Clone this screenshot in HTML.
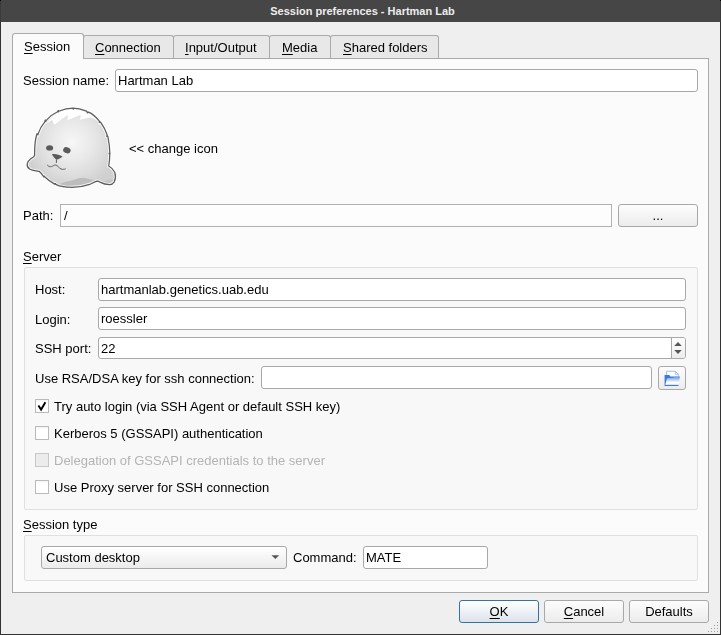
<!DOCTYPE html>
<html><head><meta charset="utf-8">
<style>
*{box-sizing:border-box;margin:0;padding:0}
html,body{width:721px;height:635px;overflow:hidden;background:#efefef}
body{-webkit-font-smoothing:antialiased}
.t,.inp span,.btn{will-change:transform}
body{position:relative;font-family:"Liberation Sans",sans-serif;font-size:13px;color:#000}
.a{position:absolute}
.t{position:absolute;white-space:nowrap;line-height:15px}
.u{text-decoration:underline;text-underline-offset:2px}
.inp{position:absolute;background:#fff;border:1px solid #a8a8a8;border-radius:3px}
.inp span{position:absolute;left:2px;top:3px;line-height:15px;white-space:nowrap}
.btn{position:absolute;border:1px solid #a8a8a8;border-radius:3px;background:linear-gradient(#fdfdfd,#ececec);text-align:center;line-height:20px}
.cb{position:absolute;width:14px;height:14px;border:1px solid #bababa;border-radius:0.5px;background:linear-gradient(#f2f2f2,#fff 2px)}
.grp{position:absolute;border:1px solid #e0e0e0;border-radius:2px;background:#f8f8f8}
</style></head><body>
<!-- title bar -->
<div class="a" style="left:0;top:0;width:721px;height:22px;background:#464646"></div>
<div class="t" style="left:2px;top:4px;width:721px;text-align:center;font:bold 11px 'Liberation Sans',sans-serif;color:#ededed;line-height:14px;will-change:auto">Session preferences - Hartman Lab</div>
<div class="a" style="left:0;top:0;width:1px;height:22px;background:#3a3a3a"></div>
<div class="a" style="left:720px;top:0;width:1px;height:22px;background:#3a3a3a"></div>
<div class="a" style="left:0;top:0;width:1px;height:1px;background:#000"></div>
<div class="a" style="left:720px;top:0;width:1px;height:1px;background:#000"></div>
<!-- window border -->
<div class="a" style="left:0;top:22px;width:1px;height:613px;background:#333"></div>
<div class="a" style="left:720px;top:22px;width:1px;height:613px;background:#333"></div>
<div class="a" style="left:0;top:634px;width:721px;height:1px;background:#333"></div>

<!-- tabs -->
<div class="a" style="left:83px;top:35px;width:91px;height:24px;background:#e8e8e8;border:1px solid #aaa;border-bottom:none;border-radius:3px 3px 0 0"></div>
<div class="a" style="left:173px;top:35px;width:97px;height:24px;background:#e8e8e8;border:1px solid #aaa;border-bottom:none;border-radius:3px 3px 0 0"></div>
<div class="a" style="left:269px;top:35px;width:62px;height:24px;background:#e8e8e8;border:1px solid #aaa;border-bottom:none;border-radius:3px 3px 0 0"></div>
<div class="a" style="left:330px;top:35px;width:109px;height:24px;background:#e8e8e8;border:1px solid #aaa;border-bottom:none;border-radius:3px 3px 0 0"></div>
<!-- pane -->
<div class="a" style="left:12px;top:58px;width:697px;height:535px;background:#fbfbfb;border:1px solid #aaa"></div>
<div class="a" style="left:12px;top:33px;width:72px;height:26px;background:#fbfbfb;border:1px solid #aaa;border-bottom:none;border-radius:3px 3px 0 0"></div>

<div class="t" style="left:24px;top:39px"><span class="u">S</span>ession</div>
<div class="t" style="left:95px;top:40px"><span class="u">C</span>onnection</div>
<div class="t" style="left:185px;top:40px"><span class="u">I</span>nput/Output</div>
<div class="t" style="left:282px;top:40px"><span class="u">M</span>edia</div>
<div class="t" style="left:343px;top:40px"><span class="u">S</span>hared folders</div>

<!-- session name -->
<div class="t" style="left:23px;top:73px">Session name:</div>
<div class="inp" style="left:115px;top:69px;width:583px;height:23px"><span>Hartman Lab</span></div>

<!-- seal icon placeholder -->
<svg class="a" style="left:24px;top:104px" width="100" height="90" viewBox="24 104 100 90">
<defs>
<radialGradient id="sg" cx="72" cy="142" r="46" gradientUnits="userSpaceOnUse">
<stop offset="0" stop-color="#f6f6f6"/><stop offset="0.4" stop-color="#eaeaea"/><stop offset="0.75" stop-color="#dcdcdc"/><stop offset="1" stop-color="#d0d0d0"/>
</radialGradient>
</defs>
<path d="M73,108.2 C77,108.3 82,109.5 86.6,111.2 L87.4,112.5 L88.6,112.1 C92,113.5 96,117 99.2,120.8 L99.6,122.4 L100.6,122.1 C103,125.5 105.5,130 107,134.5 L107,136.3 L107.8,136.4 C108.8,141 109.7,147 109.8,153 C109.8,158 109.4,162.5 108.7,166 C111,167.2 113.5,169.5 114.8,172.5 C115.8,175.5 115.6,179 114.3,181.8 C113,183.8 111.5,184.6 109.5,184.6 C106,184.6 103,183.8 100.5,182.4 C99.2,181.6 98,181 97,181.1 C94.5,182 92,183.3 89.7,184.3 C84,186.3 78,187.4 72,187.4 C65,187.3 60,186.3 56.2,184.6 L55.2,183.6 L54.6,184.1 C50.5,181.8 47.5,179.5 45.2,177.3 L44.2,176.2 L43.5,176.6 C42,174.5 40.8,172.3 39.2,171.4 C35.5,170.8 31.5,170.4 29.6,169 C27.6,167.6 26.9,165.8 27.2,164 C27.6,161.8 28.8,160 30.5,158.9 C32.3,157.8 34.2,156.8 34.6,155.5 C34.6,149 34.9,142 36,137.5 L37,133.6 L37.9,134.4 C39.5,129.5 42,125 45,121.6 L45.1,120.2 L46.3,120.3 C49.5,116.8 53.5,113.6 57.6,111.8 L58.2,110.6 L59.2,111 C63.5,109.3 68,108.3 73,108.2 Z" fill="url(#sg)"/>
<path d="M57,186 C60,183.5 64,181.8 68,181.2 C72,180.6 75,179.5 78,178.4 C81,177.7 84,177.6 87,178.6 C90.5,179.6 94,180.6 97.5,181 C94,182.8 90,184.6 85,186 C79,187.3 71,187.6 64,187 Z" fill="#bdbdbd"/>
<path d="M101,182.2 C104,180.5 108,179.5 112,179.2 C113.5,179.5 114.2,180.5 114,181.5 C112.5,184 110,184.7 107,184.5 C104.5,184.2 102.5,183.3 101,182.2 Z" fill="#c6c6c6"/>
<path d="M44.5,127.5 C47,122 51.5,117 57.5,113.2 C63,110.5 68.5,109.6 74,109.6 C80,109.8 86,111.8 91,114.8 C93.5,116.5 95.5,118.5 97.2,121 C95,119.5 92.5,118 90,117.6 L80,119.8 L80.8,114.8 L67.5,120.2 L67.9,114.8 L54.2,124.8 L52,119.8 L46.5,124 C45.8,125 45.2,126.2 44.5,127.5 Z" fill="#ffffff"/>
<path d="M73,108.2 C77,108.3 82,109.5 86.6,111.2 L87.4,112.5 L88.6,112.1 C92,113.5 96,117 99.2,120.8 L99.6,122.4 L100.6,122.1 C103,125.5 105.5,130 107,134.5 L107,136.3 L107.8,136.4 C108.8,141 109.7,147 109.8,153 C109.8,158 109.4,162.5 108.7,166 C111,167.2 113.5,169.5 114.8,172.5 C115.8,175.5 115.6,179 114.3,181.8 C113,183.8 111.5,184.6 109.5,184.6 C106,184.6 103,183.8 100.5,182.4 C99.2,181.6 98,181 97,181.1 C94.5,182 92,183.3 89.7,184.3 C84,186.3 78,187.4 72,187.4 C65,187.3 60,186.3 56.2,184.6 L55.2,183.6 L54.6,184.1 C50.5,181.8 47.5,179.5 45.2,177.3 L44.2,176.2 L43.5,176.6 C42,174.5 40.8,172.3 39.2,171.4 C35.5,170.8 31.5,170.4 29.6,169 C27.6,167.6 26.9,165.8 27.2,164 C27.6,161.8 28.8,160 30.5,158.9 C32.3,157.8 34.2,156.8 34.6,155.5 C34.6,149 34.9,142 36,137.5 L37,133.6 L37.9,134.4 C39.5,129.5 42,125 45,121.6 L45.1,120.2 L46.3,120.3 C49.5,116.8 53.5,113.6 57.6,111.8 L58.2,110.6 L59.2,111 C63.5,109.3 68,108.3 73,108.2 Z" fill="none" stroke="#ffffff" stroke-width="3.2" opacity="0.8"/>
<path d="M73,108.2 C77,108.3 82,109.5 86.6,111.2 L87.4,112.5 L88.6,112.1 C92,113.5 96,117 99.2,120.8 L99.6,122.4 L100.6,122.1 C103,125.5 105.5,130 107,134.5 L107,136.3 L107.8,136.4 C108.8,141 109.7,147 109.8,153 C109.8,158 109.4,162.5 108.7,166 C111,167.2 113.5,169.5 114.8,172.5 C115.8,175.5 115.6,179 114.3,181.8 C113,183.8 111.5,184.6 109.5,184.6 C106,184.6 103,183.8 100.5,182.4 C99.2,181.6 98,181 97,181.1 C94.5,182 92,183.3 89.7,184.3 C84,186.3 78,187.4 72,187.4 C65,187.3 60,186.3 56.2,184.6 L55.2,183.6 L54.6,184.1 C50.5,181.8 47.5,179.5 45.2,177.3 L44.2,176.2 L43.5,176.6 C42,174.5 40.8,172.3 39.2,171.4 C35.5,170.8 31.5,170.4 29.6,169 C27.6,167.6 26.9,165.8 27.2,164 C27.6,161.8 28.8,160 30.5,158.9 C32.3,157.8 34.2,156.8 34.6,155.5 C34.6,149 34.9,142 36,137.5 L37,133.6 L37.9,134.4 C39.5,129.5 42,125 45,121.6 L45.1,120.2 L46.3,120.3 C49.5,116.8 53.5,113.6 57.6,111.8 L58.2,110.6 L59.2,111 C63.5,109.3 68,108.3 73,108.2 Z" fill="none" stroke="#5e5e5e" stroke-width="1.25" stroke-linejoin="round"/>
<circle cx="37.6" cy="134.5" r="0.85" fill="#5e5e5e"/><circle cx="45.6" cy="121.2" r="0.85" fill="#5e5e5e"/><circle cx="58.3" cy="111.6" r="0.85" fill="#5e5e5e"/><circle cx="73.2" cy="108.8" r="0.85" fill="#5e5e5e"/><circle cx="87.6" cy="112.6" r="0.85" fill="#5e5e5e"/><circle cx="99.6" cy="122.2" r="0.85" fill="#5e5e5e"/><circle cx="107.3" cy="136.2" r="0.85" fill="#5e5e5e"/><circle cx="109.4" cy="153.4" r="0.85" fill="#5e5e5e"/><circle cx="55.3" cy="183.8" r="0.85" fill="#5e5e5e"/><circle cx="44.2" cy="176.6" r="0.85" fill="#5e5e5e"/><ellipse cx="49.6" cy="147.9" rx="3.5" ry="2.7" fill="#5a5a5a"/>
<ellipse cx="66.9" cy="150.3" rx="3.8" ry="3" fill="#5a5a5a" transform="rotate(20 66.9 150.3)"/>
<path d="M52,154.2 C55,153.6 59.5,154.8 62.6,156.6 C61,158 58.5,159.3 56.5,159.8 C55,158.5 53,156.5 52,154.2 Z" fill="#5a5a5a"/>
<path d="M56.4,159.5 L56.4,162.9" stroke="#5a5a5a" stroke-width="1"/>
<path d="M47.2,164.9 C48.5,166.5 50,167 51.5,166.6 C53,166 54.5,164.8 55.8,165 C57.5,165.4 59,168 61,169 C62.5,169.6 64.5,169.3 65.7,168.8" fill="none" stroke="#5e5e5e" stroke-width="1"/>
</svg>
<div class="t" style="left:129px;top:141px">&lt;&lt; change icon</div>

<!-- path -->
<div class="t" style="left:23px;top:208px">Path:</div>
<div class="inp" style="left:60px;top:204px;width:552px;height:23px;border-radius:0;background:#fdfdfd;border-color:#b0b0b0"><span style="left:3px">/</span></div>
<div class="btn" style="left:618px;top:204px;width:80px;height:23px;line-height:22px">...</div>

<!-- server -->
<div class="t" style="left:23px;top:249px"><span class="u">S</span>erver</div>
<div class="grp" style="left:24px;top:267px;width:674px;height:243px"></div>
<div class="t" style="left:35px;top:282px">Host:</div>
<div class="inp" style="left:98px;top:278px;width:588px;height:23px"><span>hartmanlab.genetics.uab.edu</span></div>
<div class="t" style="left:35px;top:312px">Login:</div>
<div class="inp" style="left:98px;top:307px;width:588px;height:23px"><span>roessler</span></div>
<div class="t" style="left:35px;top:341px">SSH port:</div>
<div class="inp" style="left:98px;top:337px;width:588px;height:22px"><span>22</span></div><div class="a" style="left:671px;top:338px;width:1px;height:20px;background:#a8a8a8"></div><div class="a" style="left:672px;top:338px;width:13px;height:20px;background:linear-gradient(#fdfdfd,#ededed);border-radius:0 2px 2px 0"></div><svg class="a" style="left:672px;top:338px" width="13" height="20" viewBox="672 338 13 20"><path d="M674.2,346 L678,342 L681.8,346 Z M674.2,350 L681.8,350 L678,354 Z" fill="#555"/></svg>
<div class="t" style="left:35px;top:371px">Use RSA/DSA key for ssh connection:</div>
<div class="inp" style="left:261px;top:366px;width:391px;height:23px"></div>
<div class="btn" style="left:658px;top:366px;width:28px;height:24px"></div><svg class="a" style="left:660px;top:366px" width="26" height="24" viewBox="660 366 26 24"><defs><linearGradient id="fg" x1="0" y1="0" x2="0" y2="1"><stop offset="0" stop-color="#5d95ee"/><stop offset="0.6" stop-color="#ffffff"/><stop offset="0.86" stop-color="#f4f8fe"/><stop offset="1" stop-color="#3a78dc"/></linearGradient></defs><path d="M666.5,376 L666.5,371.3 L675.3,371.3 L678.3,374.3 L678.3,376.5" fill="#ffffff" stroke="#8cb2f0" stroke-width="0.8"/><path d="M675.3,371.3 L675.3,374.3 L678.3,374.3" fill="none" stroke="#8cb2f0" stroke-width="0.7"/><path d="M664.6,375 L669.3,375 L670.3,376.4 L679.6,376.4 L679.6,377.2 L667,378.4 L666.2,386 L664.6,386 Z" fill="#3a78dc"/><path d="M667,378.3 L680,376.8 L678.3,386 L665,386 Z" fill="url(#fg)"/><path d="M665,385.4 L678.4,385.4" stroke="#3a78dc" stroke-width="1.1"/></svg>

<div class="cb" style="left:35px;top:399px"></div><svg class="a" style="left:35px;top:399px" width="14" height="14" viewBox="35 399 14 14"><path d="M38.4,405.4 L41.1,409.6 L45.4,402.2" fill="none" stroke="#000" stroke-width="1.9" stroke-linejoin="miter" stroke-linecap="butt"/></svg>
<div class="t" style="left:54px;top:399px">Try auto login (via SSH Agent or default SSH key)</div>
<div class="cb" style="left:35px;top:426px"></div>
<div class="t" style="left:54px;top:426px">Kerberos 5 (GSSAPI) authentication</div>
<div class="cb" style="left:35px;top:453px;background:#ececec;border-color:#c8c8c8"></div>
<div class="t" style="left:54px;top:453px;color:#b4b4b4">Delegation of GSSAPI credentials to the server</div>
<div class="cb" style="left:35px;top:480px"></div>
<div class="t" style="left:54px;top:480px">Use Proxy server for SSH connection</div>

<!-- session type -->
<div class="t" style="left:23px;top:517px"><span class="u">S</span>ession type</div>
<div class="grp" style="left:24px;top:535px;width:674px;height:46px"></div>
<div class="btn" style="left:41px;top:546px;width:246px;height:23px;background:linear-gradient(#ffffff,#ebebeb)"></div><div class="t" style="left:46px;top:550px">Custom desktop</div><svg class="a" style="left:270px;top:553px" width="12" height="8" viewBox="270 553 12 8"><path d="M271.5,555.3 L279.2,555.3 L275.35,559 Z" fill="#555"/></svg>
<div class="t" style="left:293px;top:550px">Command:</div>
<div class="inp" style="left:363px;top:546px;width:125px;height:23px"><span>MATE</span></div>

<!-- buttons -->
<div class="btn" style="left:459px;top:600px;width:80px;height:23px;border-color:#3572a2;background:linear-gradient(#ffffff,#dce3eb);line-height:22px"><span class="u">O</span>K</div>
<div class="btn" style="left:544px;top:600px;width:80px;height:23px;line-height:22px"><span class="u">C</span>ancel</div>
<div class="btn" style="left:629px;top:600px;width:80px;height:23px;line-height:22px">Defaults</div>
<div class="a" style="left:717px;top:622px;width:1px;height:1px;background:#a0a0a0"></div><div class="a" style="left:714px;top:625px;width:1px;height:1px;background:#a0a0a0"></div><div class="a" style="left:717px;top:625px;width:1px;height:1px;background:#a0a0a0"></div><div class="a" style="left:711px;top:628px;width:1px;height:1px;background:#a0a0a0"></div><div class="a" style="left:714px;top:628px;width:1px;height:1px;background:#a0a0a0"></div><div class="a" style="left:717px;top:628px;width:1px;height:1px;background:#a0a0a0"></div><div class="a" style="left:708px;top:631px;width:1px;height:1px;background:#a0a0a0"></div><div class="a" style="left:711px;top:631px;width:1px;height:1px;background:#a0a0a0"></div><div class="a" style="left:714px;top:631px;width:1px;height:1px;background:#a0a0a0"></div><div class="a" style="left:717px;top:631px;width:1px;height:1px;background:#a0a0a0"></div>
</body></html>
